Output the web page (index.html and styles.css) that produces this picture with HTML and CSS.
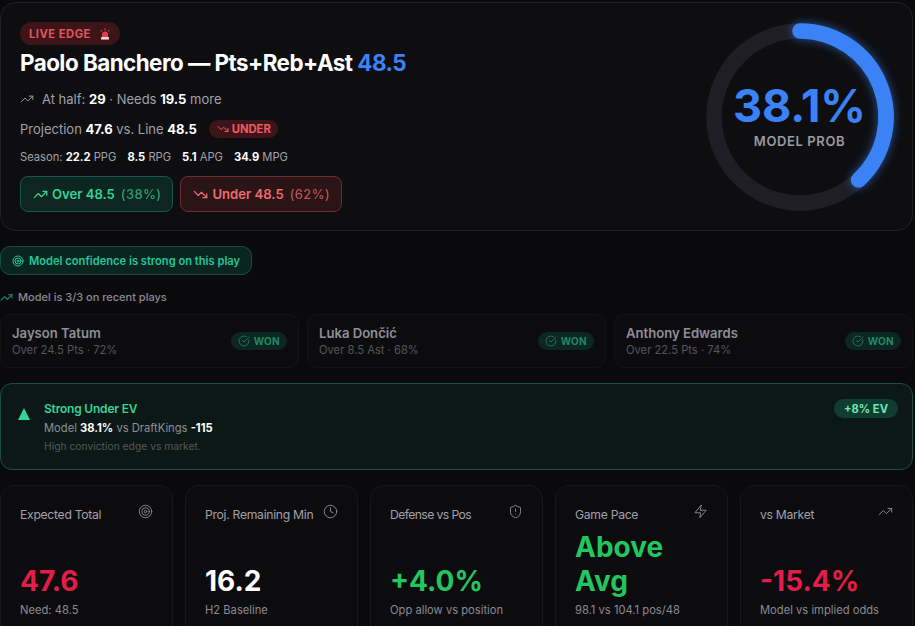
FILE: index.html
```html
<!DOCTYPE html>
<html lang="en">
<head>
<meta charset="utf-8">
<title>Paolo Banchero Live Edge</title>
<link rel="stylesheet" href="styles.css">
</head>
<body>
<main class="page">
  <section class="hero">
    <div class="hero-info">
      <span class="live-badge">LIVE EDGE
        <svg class="siren" viewBox="0 0 14 14"><path d="M3.500 10.500V7.500a3.500 3.500 0 0 1 7 0v3z" fill="#e5394f"/><path d="M2.500 10.500h9V13.500h-9z" fill="#f3d5dc"/><path d="M7 .5v2M2 2.500l1.400 1.400M12 2.500l-1.400 1.400" stroke="#e5394f" stroke-width="1.300" fill="none"/></svg>
      </span>
      <h1 class="title">Paolo Banchero — Pts+Reb+Ast <span class="line-blue">48.5</span></h1>
      <p class="half">
        <svg class="ic ic-half" viewBox="0 0 24 24"><path d="M22 7l-8.500 8.500-5-5L2 17"/><path d="M16 7h6v6"/></svg>
        <span>At half: <b>29</b> · Needs <b>19.5</b> more</span>
      </p>
      <p class="proj">
        <span>Projection <b>47.6</b> vs. Line <b>48.5</b></span>
        <span class="under-tag"><svg class="ic ic-tag" viewBox="0 0 24 24"><path d="M22 17l-8.500-8.500-5 5L2 7"/><path d="M16 17h6v-6"/></svg>UNDER</span>
      </p>
      <p class="season">
        <span>Season: <b>22.2</b> PPG</span><span><b>8.5</b> RPG</span><span><b>5.1</b> APG</span><span><b>34.9</b> MPG</span>
      </p>
      <div class="choices">
        <button class="choice choice-over"><svg class="ic ic-btn" viewBox="0 0 24 24"><path d="M22 7l-8.500 8.500-5-5L2 17"/><path d="M16 7h6v6"/></svg>Over 48.5<span class="pct">(38%)</span></button>
        <button class="choice choice-under"><svg class="ic ic-btn" viewBox="0 0 24 24"><path d="M22 17l-8.500-8.500-5 5L2 7"/><path d="M16 17h6v-6"/></svg>Under 48.5<span class="pct">(62%)</span></button>
      </div>
    </div>
    <div class="ring">
      <svg class="ring-svg" viewBox="0 0 188 188">
        <defs><filter id="glow" x="-30%" y="-30%" width="160%" height="160%"><feGaussianBlur stdDeviation="5"/></filter></defs>
        <circle class="ring-track" cx="94" cy="94" r="86"/>
        <path class="ring-glow" d="M94 8A86 86 0 0 1 152.600 157" filter="url(#glow)"/>
        <path class="ring-arc" d="M94 8A86 86 0 0 1 152.600 157"/>
      </svg>
      <div class="ring-label">
        <span class="ring-value">38.1%</span>
        <span class="ring-cap">MODEL PROB</span>
      </div>
    </div>
  </section>

  <div class="confidence">
    <svg class="ic ic-conf" viewBox="0 0 24 24"><circle cx="12" cy="12" r="10"/><circle cx="12" cy="12" r="6"/><circle cx="12" cy="12" r="2"/></svg>
    Model confidence is strong on this play
  </div>

  <p class="recent-head"><svg class="ic ic-recent" viewBox="0 0 24 24"><path d="M22 7l-8.500 8.500-5-5L2 17"/><path d="M16 7h6v6"/></svg>Model is 3/3 on recent plays</p>

  <section class="recent">
    <article class="play"><div><h3>Jayson Tatum</h3><p>Over 24.5 Pts · 72%</p></div><span class="won"><svg class="ic ic-won" viewBox="0 0 24 24"><path d="M21.800 10A10 10 0 1 1 17 3.300"/><path d="M9 11l3 3L22 4"/></svg>WON</span></article>
    <article class="play"><div><h3>Luka Dončić</h3><p>Over 8.5 Ast · 68%</p></div><span class="won"><svg class="ic ic-won" viewBox="0 0 24 24"><path d="M21.800 10A10 10 0 1 1 17 3.300"/><path d="M9 11l3 3L22 4"/></svg>WON</span></article>
    <article class="play"><div><h3>Anthony Edwards</h3><p>Over 22.5 Pts · 74%</p></div><span class="won"><svg class="ic ic-won" viewBox="0 0 24 24"><path d="M21.800 10A10 10 0 1 1 17 3.300"/><path d="M9 11l3 3L22 4"/></svg>WON</span></article>
  </section>

  <section class="ev">
    <svg class="ev-tri" viewBox="0 0 12 12"><path d="M6 0l6 12H0z"/></svg>
    <div class="ev-body">
      <h2>Strong Under EV</h2>
      <p class="ev-main">Model <b>38.1%</b> vs DraftKings <b>-115</b></p>
      <p class="ev-note">High conviction edge vs market.</p>
    </div>
    <span class="ev-tag">+8% EV</span>
  </section>

  <section class="metrics">
    <article class="metric">
      <header><span>Expected Total</span><svg class="ic ic-metric" viewBox="0 0 24 24"><circle cx="12" cy="12" r="10"/><circle cx="12" cy="12" r="6"/><circle cx="12" cy="12" r="2"/></svg></header>
      <strong class="val red">47.6</strong><small>Need: 48.5</small>
    </article>
    <article class="metric">
      <header><span>Proj. Remaining Min</span><svg class="ic ic-metric" viewBox="0 0 24 24"><circle cx="12" cy="12" r="10"/><path d="M12 6v6l4 2"/></svg></header>
      <strong class="val white">16.2</strong><small>H2 Baseline</small>
    </article>
    <article class="metric">
      <header><span class="tight">Defense vs Pos</span><svg class="ic ic-metric" viewBox="0 0 24 24"><path d="M20 13c0 5-3.500 7.500-7.700 9a1 1 0 0 1-.6 0C7.500 20.500 4 18 4 13V6a1 1 0 0 1 1-1c2 0 4.500-1.200 6.200-2.700a1.200 1.200 0 0 1 1.600 0C14.500 3.800 17 5 19 5a1 1 0 0 1 1 1z"/><path d="M12 8v4M12 16h.01"/></svg></header>
      <strong class="val green">+4.0%</strong><small>Opp allow vs position</small>
    </article>
    <article class="metric">
      <header><span>Game Pace</span><svg class="ic ic-metric" viewBox="0 0 24 24"><path d="M13 2L3 14h9l-1 8 10-12h-9z"/></svg></header>
      <strong class="val green">Above Avg</strong><small>98.1 vs 104.1 pos/48</small>
    </article>
    <article class="metric">
      <header><span>vs Market</span><svg class="ic ic-metric" viewBox="0 0 24 24"><path d="M22 7l-8.500 8.500-5-5L2 17"/><path d="M16 7h6v6"/></svg></header>
      <strong class="val red">-15.4%</strong><small>Model vs implied odds</small>
    </article>
  </section>
</main>
</body>
</html>
```

FILE: styles.css
```css
* { box-sizing: border-box; }
html, body { margin: 0; padding: 0; background: #0a0a0c; overflow: hidden; height: 626px; }
body { font-family: Inter, "Liberation Sans", sans-serif; color: #a1a1aa; }
h1, h2, h3, p { margin: 0; }
b { color: #fff; font-weight: 700; }
.page { width: 913px; padding-top: 2px; display: flex; flex-direction: column; }
.ic { fill: none; stroke: currentColor; stroke-width: 2; stroke-linecap: round; stroke-linejoin: round; flex: none; }

.hero { height: 229px; border: 1px solid #212127; border-radius: 16px; background: #0e0e11; padding: 19px 18.500px 0 19px; display: flex; justify-content: space-between; }
.hero-info { display: flex; flex-direction: column; align-items: flex-start; }
.live-badge { height: 23px; padding: 0 9px; border-radius: 12px; background: #3d1519; color: #e2545f; font-size: 11.200px; font-weight: 700; letter-spacing: .5px; display: inline-flex; align-items: center; gap: 8px; }
.siren { width: 12px; height: 12px; }
.title { margin-top: 3px; font-size: 22.400px; line-height: 30px; font-weight: 700; color: #fff; letter-spacing: -.53px; white-space: nowrap; }
.line-blue { color: #3b82f6; }
.half { margin-top: 11px; font-size: 13px; line-height: 20px; display: flex; align-items: center; gap: 8px; }
.ic-half { width: 14px; height: 14px; color: #a1a1aa; stroke-width: 1.600; }
.proj { margin-top: 10px; font-size: 13px; line-height: 20px; display: flex; align-items: center; gap: 12px; }
.under-tag { height: 18px; padding: 0 7px 0 8px; border-radius: 9px; background: #3d1519; color: #ef5a63; font-size: 11.200px; font-weight: 700; display: inline-flex; align-items: center; gap: 3px; }
.ic-tag { width: 12px; height: 12px; }
.season { margin-top: 9px; font-size: 11.200px; line-height: 18px; display: flex; gap: 11px; }
.choices { margin-top: 10px; display: flex; gap: 7px; }
.choice { height: 36px; border-radius: 8px; font: 600 13.100px Inter, sans-serif; display: inline-flex; align-items: center; padding: 0 11px 0 12px; }
.ic-btn { width: 15px; height: 15px; margin-right: 4px; }
.pct { margin-left: 6px; opacity: .7; font-weight: 500; letter-spacing: .3px; }
.choice-over { background: #0d2620; border: 1px solid #1c5743; color: #34d399; }
.choice-under { background: #2a1416; border: 1px solid #6e2c30; color: #f06a6f; }

.ring { position: relative; width: 188px; height: 188px; margin-top: .7px; flex: none; }
.ring-svg { width: 188px; height: 188px; overflow: visible; display: block; }
.ring-track { fill: none; stroke: #1e1e24; stroke-width: 15.500; }
.ring-arc, .ring-glow { fill: none; stroke: #3b82f6; stroke-width: 15.500; stroke-linecap: round; }
.ring-glow { opacity: .6; }
.ring-label { position: absolute; inset: 0 0 3.500px; display: flex; flex-direction: column; align-items: center; justify-content: center; }
.ring-value { font-size: 45px; line-height: 52px; font-weight: 700; color: #3b82f6; letter-spacing: -.1px; }
.ring-cap { font-size: 13px; line-height: 16px; font-weight: 600; letter-spacing: .6px; color: #9a9aa2; margin-top: 1px; }

.confidence { align-self: flex-start; margin-top: 15px; height: 29px; padding: 0 11px; border: 1px solid #12503f; border-radius: 10px; background: #0a2420; color: #1fc79a; font-size: 11.150px; font-weight: 600; display: inline-flex; align-items: center; gap: 5px; }
.ic-conf { width: 12px; height: 12px; }
.recent-head { margin-top: 14px; font-size: 11px; line-height: 16px; font-weight: 500; color: #8a8a92; display: flex; align-items: center; gap: 5px; }
.ic-recent { width: 13px; height: 13px; color: #1c8f6c; }
.recent { margin-top: 9px; display: grid; grid-template-columns: repeat(3, 1fr); gap: 8px; }
.play { height: 54px; padding: 0 11px 2px; border: 1px solid #141418; border-radius: 10px; background: #0c0c0f; display: flex; justify-content: space-between; align-items: center; }
.play h3 { font-size: 13.100px; line-height: 18px; font-weight: 600; color: #8f8f96; }
.play p { font-size: 11.200px; line-height: 14px; color: #55555b; margin-top: 1px; }
.won { height: 18px; padding: 0 7px; border-radius: 9px; background: #0c2620; color: #1f8a66; font-size: 10px; font-weight: 700; display: inline-flex; align-items: center; gap: 4px; letter-spacing: .3px; margin-top: 2px; }
.ic-won { width: 12px; height: 12px; stroke-width: 1.600; }

.ev { margin-top: 15px; height: 87px; padding: 15px 14px 0 17px; border: 1px solid #1a4f3f; border-radius: 12px; background: #0c1816; display: flex; align-items: flex-start; }
.ev-tri { width: 12px; height: 12px; margin-top: 9px; fill: #34d399; flex: none; }
.ev-body { margin: 2px 0 0 14px; flex: 1; }
.ev-body h2 { font-size: 12px; line-height: 16px; font-weight: 600; color: #34d399; letter-spacing: -.2px; }
.ev-main { margin-top: 3px; font-size: 11.200px; line-height: 16px; color: #8f8f96; }
.ev-note { margin-top: 3px; font-size: 10.300px; line-height: 14px; color: #55555b; }
.ev-tag { height: 19px; padding: 0 10px; border-radius: 10px; background: #113d31; color: #6ee7b7; font-size: 11.200px; font-weight: 700; display: inline-flex; align-items: center; }

.metrics { margin-top: 15px; display: grid; grid-template-columns: repeat(5, 173px); gap: 12px; height: 170px; }
.metric { padding: 18px 19px 20px; border: 1px solid #18181c; border-radius: 14px; background: #0c0c0f; display: flex; flex-direction: column; }
.metric header { height: 20px; display: flex; justify-content: space-between; align-items: center; font-size: 12.200px; color: #a1a1aa; letter-spacing: -.3px; }
.metric header span { white-space: nowrap; }
.metric header .tight { letter-spacing: -.6px; }
.ic-metric { width: 15px; height: 15px; stroke-width: 1.500; color: #8a8a92; margin-top: -6px; }
.val { margin-top: auto; font-size: 28px; line-height: 34px; font-weight: 700; }
.val.red { color: #e11d48; }
.val.white { color: #fff; }
.val.green { color: #22c55e; }
.metric small { margin-top: 4px; font-size: 11.200px; line-height: 16px; color: #8a8a92; margin-bottom: 16px; }
```
